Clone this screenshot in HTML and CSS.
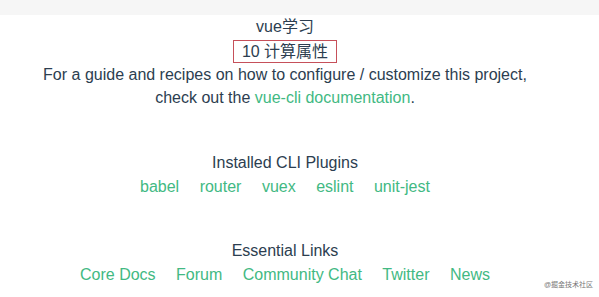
FILE: index.html
```html
<!DOCTYPE html>
<html>
<head>
<meta charset="utf-8">
<link rel="stylesheet" href="styles.css">
</head>
<body>
<div class="topbar"></div>
<div class="app">
  <div class="line">vue学习</div>
  <div class="line"><span class="boxed">10 计算属性</span></div>
  <p class="intro">For a guide and recipes on how to configure / customize this project,<br>check out the <a href="#">vue-cli documentation</a>.</p>
  <h3 class="first">Installed CLI Plugins</h3>
  <ul>
    <li><a href="#">babel</a></li>
    <li><a href="#">router</a></li>
    <li><a href="#">vuex</a></li>
    <li><a href="#">eslint</a></li>
    <li><a href="#">unit-jest</a></li>
  </ul>
  <h3 class="second">Essential Links</h3>
  <ul>
    <li><a href="#">Core Docs</a></li>
    <li><a href="#">Forum</a></li>
    <li><a href="#">Community Chat</a></li>
    <li><a href="#">Twitter</a></li>
    <li><a href="#">News</a></li>
  </ul>
</div>
<div class="watermark">@掘金技术社区</div>
</body>
</html>
```

FILE: styles.css
```css
html, body {
  margin: 0;
  padding: 0;
  background: #fff;
}
body {
  width: 599px;
  height: 297px;
  overflow: hidden;
  position: relative;
  font-family: "Liberation Sans", Arial, "Noto Sans CJK SC", sans-serif;
  font-size: 16px;
  color: #2c3e50;
}
.topbar {
  height: 15px;
  background: #f6f6f6;
}
.app {
  text-align: center;
  line-height: 23px;
  padding-right: 29px;
}
.line {
  height: 23px;
}
.boxed {
  display: inline-block;
  border: 1px solid #c6505a;
  padding: 0 8px;
  line-height: 21px;
  margin-top: 2px;
}
.intro {
  margin: 0;
  margin-top: 2px;
}
a {
  color: #42b983;
  text-decoration: none;
}
h3 {
  font-size: 16px;
  font-weight: normal;
  line-height: 24px;
}
h3.first {
  margin: 42px 0 0;
}
h3.second {
  margin: 40px 0 0;
}
ul {
  list-style: none;
  margin: 0;
  padding: 0;
  line-height: 24px;
}
li {
  display: inline-block;
  margin: 0 8px;
}
.watermark {
  position: absolute;
  right: 6px;
  bottom: 8px;
  font-size: 7px;
  color: #777;
}
```
